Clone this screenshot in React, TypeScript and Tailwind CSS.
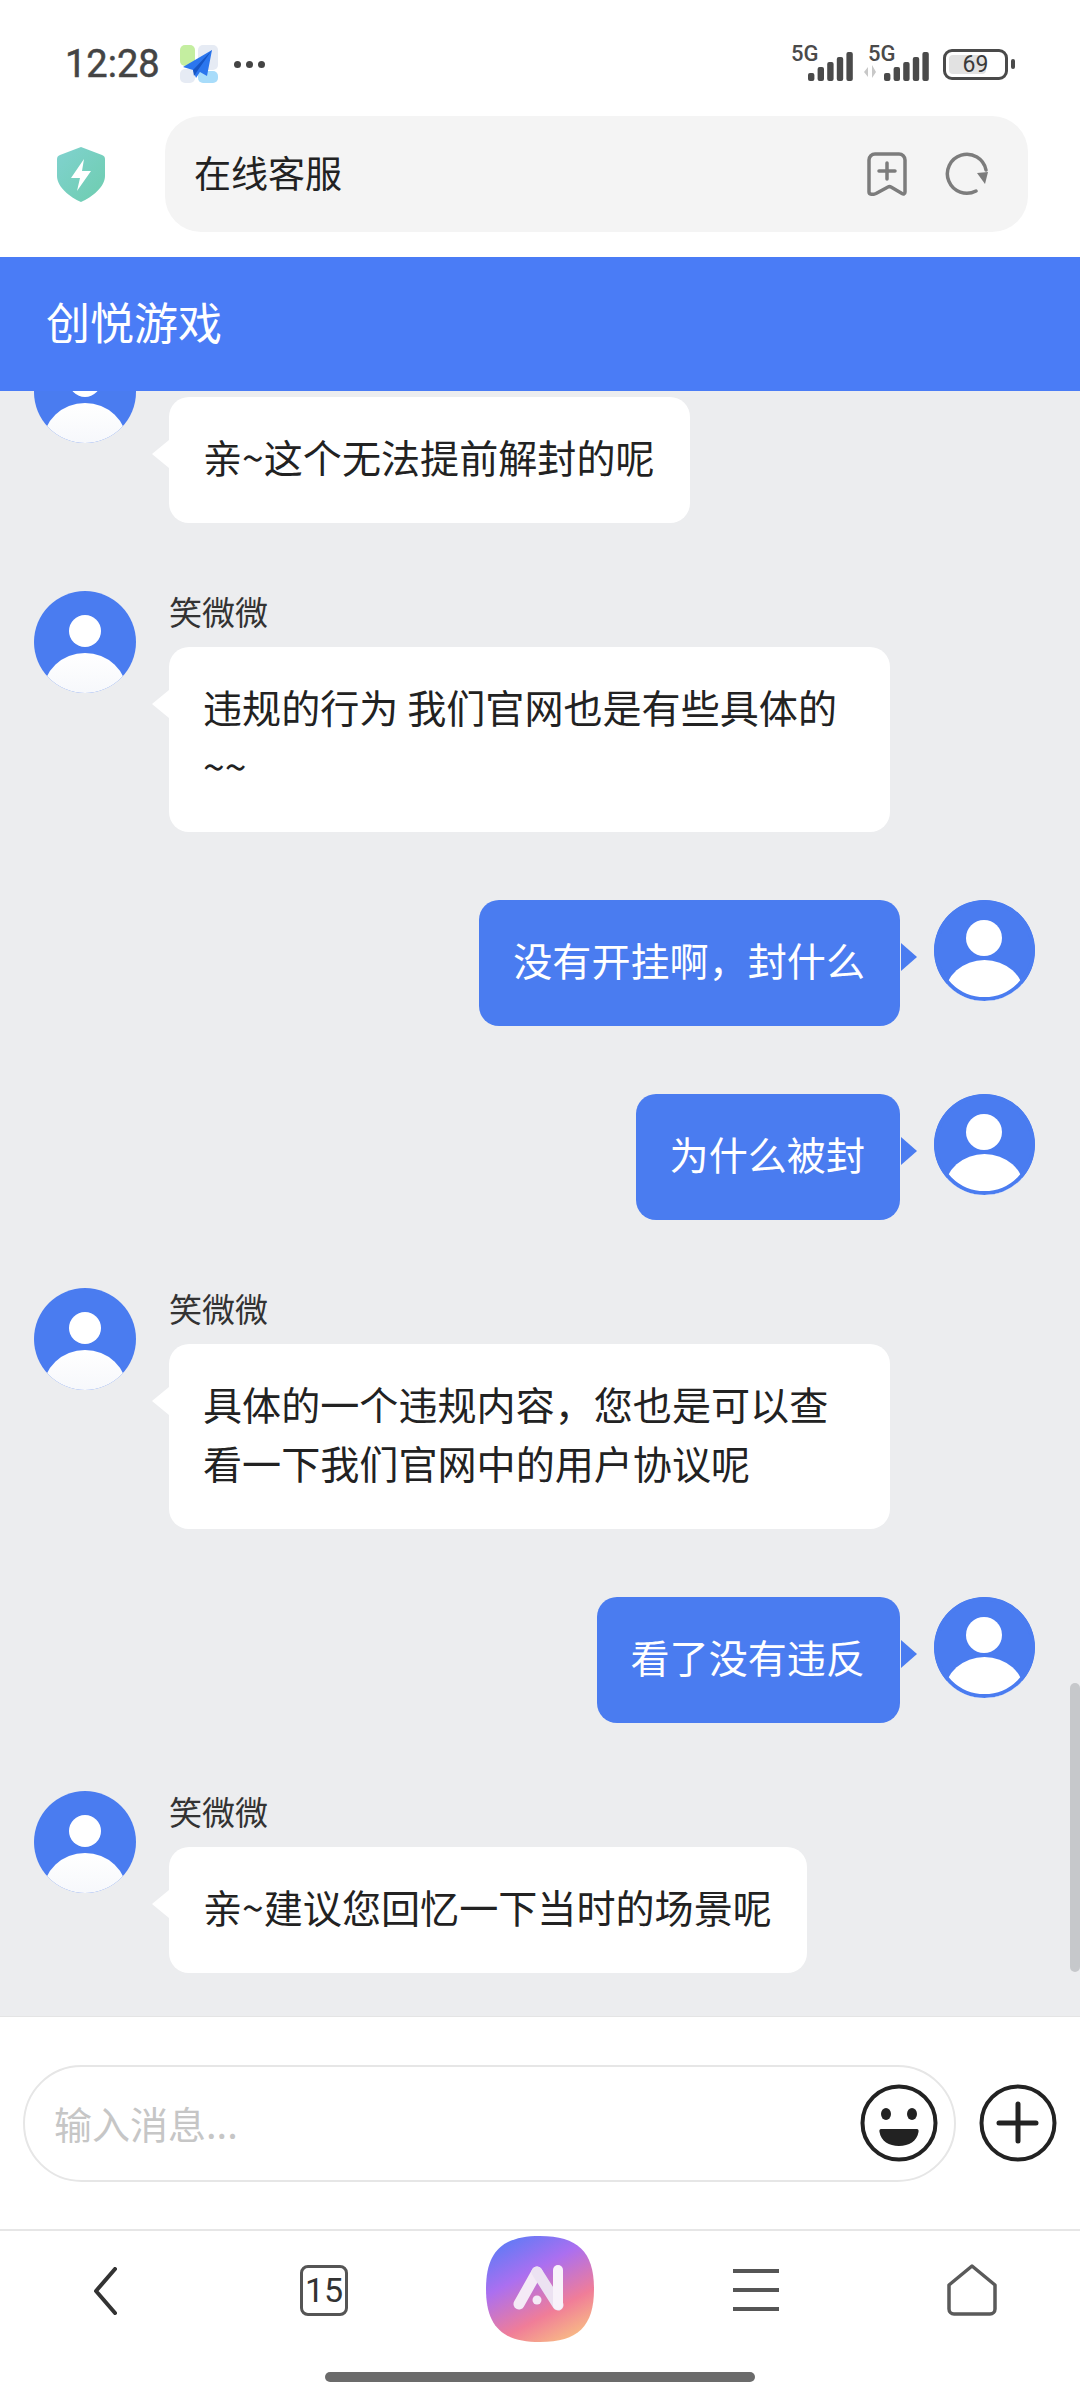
const CJK = "font-['Noto_Sans_CJK_SC','Noto_Sans',sans-serif]";

function StatusBars() {
  const heights = [8, 14, 19, 24, 29];
  return (
    <>
      {heights.map((h, i) => (
        <rect key={i} x={i * 9.6} y={29 - h} width="6.4" height={h} rx="2" fill="#4a4a4a" />
      ))}
    </>
  );
}

function SignalIcons() {
  return (
    <div className="relative h-[36px] w-[138px]">
      <svg width="138" height="36" viewBox="0 0 138 36">
        <g transform="translate(17 6)">
          <StatusBars />
        </g>
        <g transform="translate(93 6)">
          <StatusBars />
          <path d="M-16 15l-4 5 4 5zM-12 13v13l4-6z" fill="#c8c8c8" />
        </g>
      </svg>
      <span className="absolute left-0 top-[-5px] font-['Roboto',sans-serif] text-[22px] font-medium leading-[26px] text-[#4a4a4a]">
        5G
      </span>
      <span className="absolute left-[77px] top-[-5px] font-['Roboto',sans-serif] text-[22px] font-medium leading-[26px] text-[#4a4a4a]">
        5G
      </span>
    </div>
  );
}

function Battery() {
  return (
    <div className="flex items-center gap-[3px]">
      <div className="relative flex h-[31px] w-[65px] items-center justify-center rounded-[9px] border-[3px] border-[#4a4a4a] p-[3px]">
        <div className="absolute bottom-[3px] left-[3px] top-[3px] w-[37px] rounded-[4px] bg-[#e2e2e2]" />
        <span className="relative font-['Roboto',sans-serif] text-[23px] leading-none text-[#3a3a3a]">69</span>
      </div>
      <div className="h-[10px] w-[4px] rounded-[2px] bg-[#4a4a4a]" />
    </div>
  );
}

function AppIcon() {
  return (
    <svg width="38" height="38" viewBox="0 0 38 38">
      <rect x="0" y="0" width="15" height="21" rx="5" fill="#c4eea0" />
      <rect x="18" y="0" width="20" height="25" rx="5" fill="#e6ebf4" />
      <rect x="0" y="24" width="15" height="14" rx="5" fill="#e6ebf4" />
      <rect x="18" y="26" width="20" height="12" rx="5" fill="#a8dcfa" />
      <path d="M32 5L3 22l10 3 3 8 4-6 7 4z" fill="#2b76ee" />
      <path d="M32 5L13 25l1 6 4-6z" fill="#1655c4" />
    </svg>
  );
}

function Shield() {
  return (
    <svg width="48" height="55" viewBox="0 0 48 55">
      <defs>
        <linearGradient id="shieldFill" x1="0" y1="0" x2="1" y2="1">
          <stop offset="0" stopColor="#80d2cf" />
          <stop offset="1" stopColor="#6ecdaf" />
        </linearGradient>
      </defs>
      <path
        d="M24 0l21 8c2 .7 3 2 3 4v17c0 11-13 21-24 26C13 50 0 40 0 29V12c0-2 1-3.300 3-4z"
        fill="url(#shieldFill)"
      />
      <path d="M27 12L14 31h9l-3 13 14-20h-9z" fill="#fff" />
    </svg>
  );
}

function BookmarkIcon() {
  return (
    <svg width="40" height="44" viewBox="0 0 40 44" fill="none" stroke="#7c7c7c" strokeWidth="3.500" strokeLinejoin="round" strokeLinecap="round">
      <path d="M2 8a6 6 0 0 1 6-6h24a6 6 0 0 1 6 6v32c0 2-1.500 2.500-3 1.500l-11-6.500c-1-.5-2-.5-3 0L9 41.500c-3 1.500-7 1-7-1.500z" />
      <path d="M20 11v16M12 19h16" />
    </svg>
  );
}

function RefreshIcon() {
  return (
    <svg width="44" height="44" viewBox="0 0 44 44" fill="none">
      <path d="M31 39A19.500 19.500 0 1 1 41 18" stroke="#7c7c7c" strokeWidth="3.500" strokeLinecap="round" />
      <path d="M32 21l11-1-3 12z" fill="#7c7c7c" />
    </svg>
  );
}

function Avatar({ mine = false }: { mine?: boolean }) {
  if (mine) {
    return (
      <div className="relative h-[101px] w-[101px] shrink-0 overflow-hidden rounded-full bg-[#4a7cf0]">
        <div className="absolute left-[32px] top-[20px] h-[36px] w-[36px] rounded-full bg-white" />
        <div className="absolute left-[11px] top-[60px] h-[70px] w-[79px] rounded-[50%] bg-white" />
        <div className="absolute inset-0 rounded-full border-[4px] border-[#4a7cf0]" />
      </div>
    );
  }
  return (
    <div className="relative h-[102px] w-[102px] shrink-0 overflow-hidden rounded-full bg-[#4a7cf0]">
      <div className="absolute left-[35px] top-[24px] h-[32px] w-[32px] rounded-full bg-white" />
      <div className="absolute left-[9px] top-[62px] h-[80px] w-[84px] rounded-[50%] bg-gradient-to-b from-white to-[#eef1f8]" />
    </div>
  );
}

function Incoming({ name, text }: { name?: string; text: string }) {
  return (
    <div className="flex gap-[33px] pl-[34px]">
      <Avatar />
      <div>
        <p className="h-[56px] text-[33px] leading-[41px] text-[#333]">{name ?? "笑微微"}</p>
        <div className="relative w-fit max-w-[721px] rounded-[20px] bg-white pb-[37px] pl-[34px] pr-[35px] pt-[30px] text-[39.1px] leading-[59px] text-[#222]">
          {text}
          <div className="absolute left-[-17px] top-[43px] h-0 w-0 border-y-[14px] border-r-[17px] border-y-transparent border-r-white" />
        </div>
      </div>
    </div>
  );
}

function Outgoing({ text }: { text: string }) {
  return (
    <div className="flex justify-end gap-[34px] pr-[45px]">
      <div className="relative rounded-[20px] bg-[#4a7cf0] pb-[37px] pl-[34px] pr-[35px] pt-[30px] text-[39.1px] leading-[59px] text-white">
        {text}
        <div className="absolute right-[-17px] top-[43px] h-0 w-0 border-y-[14px] border-l-[16px] border-y-transparent border-l-[#4a7cf0]" />
      </div>
      <Avatar mine />
    </div>
  );
}

function SmileIcon() {
  return (
    <svg width="78" height="78" viewBox="0 0 78 78">
      <circle cx="39" cy="39" r="36.500" fill="none" stroke="#222" strokeWidth="4" />
      <ellipse cx="26" cy="30" rx="5" ry="6" fill="#222" />
      <ellipse cx="52" cy="30" rx="5" ry="6" fill="#222" />
      <path d="M21 45h36c1 0 2 1 1.500 3C57 57 49 62 39 62S21 57 19.500 48c-.5-2 .5-3 1.500-3z" fill="#222" />
    </svg>
  );
}

function PlusIcon() {
  return (
    <svg width="78" height="78" viewBox="0 0 78 78" fill="none" stroke="#222">
      <circle cx="39" cy="39" r="36.500" strokeWidth="4" />
      <path d="M39 20v37M20 39h37" strokeWidth="5" strokeLinecap="round" />
    </svg>
  );
}

function NavLogo() {
  return (
    <svg width="108" height="106" viewBox="0 0 108 106">
      <defs>
        <linearGradient id="navLogoFill" x1="0.2" y1="0" x2="0.75" y2="1">
          <stop offset="0" stopColor="#5d7bf6" />
          <stop offset="0.35" stopColor="#ab6ff0" />
          <stop offset="0.72" stopColor="#f07d98" />
          <stop offset="1" stopColor="#f8bb85" />
        </linearGradient>
      </defs>
      <path d="M54 0C92 0 108 16 108 53S92 106 54 106 0 90 0 53 16 0 54 0z" fill="url(#navLogoFill)" />
      <path d="M33 68L51 36" stroke="#f4eaf6" strokeWidth="11" strokeLinecap="round" />
      <path d="M51 36L72 69" stroke="#ece2f2" strokeWidth="11" strokeLinecap="round" />
      <path d="M72 69V34" stroke="#f8f2fa" strokeWidth="10" strokeLinecap="round" />
      <circle cx="51" cy="64" r="4.500" fill="#f4eaf6" />
    </svg>
  );
}

export default function App() {
  return (
    <div className={`flex h-[2400px] w-[1080px] flex-col overflow-hidden bg-white ${CJK}`}>
      {/* status bar + browser address row */}
      <div className="h-[116px] shrink-0 pl-[65px] pr-[65px]">
        <div className="flex items-center pt-[45px]">
          <span className="w-[95px] font-['Roboto',sans-serif] text-[38px] leading-[38px] text-[#444] [-webkit-text-stroke:0.5px_#444]">12:28</span>
          <div className="ml-[20px]">
            <AppIcon />
          </div>
          <div className="ml-[16px] flex gap-[5px]">
            <div className="h-[7px] w-[7px] rounded-full bg-[#444]" />
            <div className="h-[7px] w-[7px] rounded-full bg-[#444]" />
            <div className="h-[7px] w-[7px] rounded-full bg-[#444]" />
          </div>
          <div className="ml-auto flex items-center gap-[14px]">
            <SignalIcons />
            <Battery />
          </div>
        </div>
      </div>
      <div className="flex h-[141px] shrink-0 items-start pl-[57px]">
        <div className="mt-[31px]">
          <Shield />
        </div>
        <div className="ml-[60px] flex h-[116px] w-[863px] items-center rounded-[36px] bg-[#f4f4f4] pl-[29px] pr-[39px]">
          <span className="pb-[2px] text-[37px] text-[#222]">在线客服</span>
          <div className="ml-auto flex items-center gap-[38px]">
            <BookmarkIcon />
            <RefreshIcon />
          </div>
        </div>
      </div>

      <header className="relative z-10 flex h-[134px] shrink-0 items-center bg-[#4a7cf6] pb-[6px] pl-[46px] text-[44px] text-white">
        创悦游戏
      </header>

      <main className="relative flex min-h-0 flex-1 flex-col justify-end gap-[68px] overflow-hidden bg-[#ecedef] pb-[43px]">
        <Incoming text="亲~这个无法提前解封的呢" />
        <Incoming text="违规的行为 我们官网也是有些具体的 ~~" />
        <Outgoing text="没有开挂啊，封什么" />
        <Outgoing text="为什么被封" />
        <Incoming text="具体的一个违规内容，您也是可以查看一下我们官网中的用户协议呢" />
        <Outgoing text="看了没有违反" />
        <Incoming text="亲~建议您回忆一下当时的场景呢" />
        <div className="absolute bottom-[44px] right-0 h-[289px] w-[10px] rounded-full bg-[#c6c8cb]" />
      </main>

      <div className="flex h-[213px] shrink-0 items-center border-t border-t-[#e4e4e4] pl-[23px]">
        <div className="flex h-[117px] w-[933px] items-center rounded-full border-2 border-[#e6e6e6] pl-[29px] pr-[16px]">
          <span className="pb-[2px] text-[38px] text-[#c6c6c6]">输入消息...</span>
          <div className="ml-auto">
            <SmileIcon />
          </div>
        </div>
        <div className="ml-[23px]">
          <PlusIcon />
        </div>
      </div>

      <nav className="h-[171px] shrink-0 border-t-2 border-t-[#e6e6e6]">
        <div className="grid h-[116px] grid-cols-5 place-items-center">
          <svg className="mr-[6px] mt-[3px]" width="24" height="48" viewBox="0 0 24 48" fill="none" stroke="#333" strokeWidth="4" strokeLinecap="round" strokeLinejoin="round">
            <path d="M22 2L3 24l19 22" />
          </svg>
          <div className="mt-[2px] flex h-[51px] w-[48px] items-center justify-center rounded-[8px] border-[3px] border-[#555] font-['Roboto',sans-serif] text-[34px] leading-none text-[#333]">
            15
          </div>
          <NavLogo />
          <div className="mt-[2px] flex w-[46px] flex-col gap-[15px]">
            <div className="h-[4px] bg-[#555]" />
            <div className="h-[4px] bg-[#555]" />
            <div className="h-[4px] bg-[#555]" />
          </div>
          <svg className="mt-[2px]" width="50" height="52" viewBox="0 0 50 52" fill="none" stroke="#5a5a5a" strokeWidth="3.500" strokeLinejoin="round">
            <path d="M25 2L48 21v24a5 5 0 0 1-5 5H7a5 5 0 0 1-5-5V21z" />
          </svg>
        </div>
        <div className="mx-auto mt-[25px] h-[10px] w-[430px] rounded-full bg-[#6b6b6b]" />
      </nav>
    </div>
  );
}
